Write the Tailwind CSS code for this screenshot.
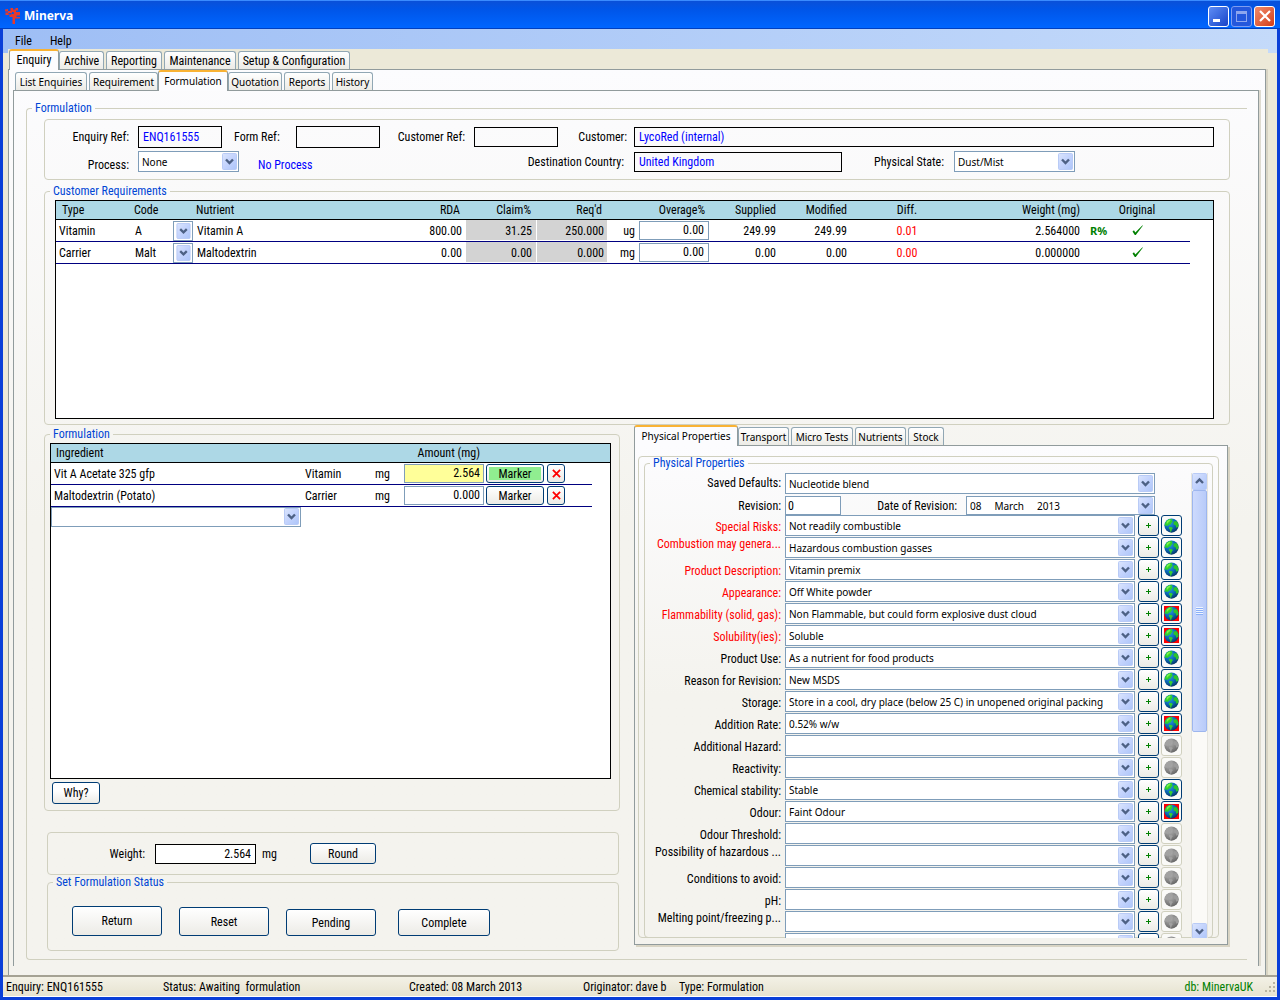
<!DOCTYPE html>
<html lang="en">
<head>
<meta charset="utf-8">
<title>Minerva</title>
<script src="https://cdn.jsdelivr.net/npm/@tailwindcss/browser@4"></script>
</head>
<body class="flex min-h-screen flex-col overflow-x-hidden bg-[#0a3fd8] font-['Roboto_Condensed','Liberation_Sans_Narrow',sans-serif] text-xs leading-[14px] text-black">

<svg class="absolute h-0 w-0" aria-hidden="true">
  <defs>
    <linearGradient id="btnBlue" x1="0" y1="0" x2="1" y2="1"><stop offset="0" stop-color="#dbe5fd"/><stop offset=".5" stop-color="#c3d3fd"/><stop offset="1" stop-color="#adc5f9"/></linearGradient>
    <radialGradient id="sea" cx=".38" cy=".3" r=".75"><stop offset="0" stop-color="#2b9be0"/><stop offset=".55" stop-color="#0a68b4"/><stop offset="1" stop-color="#06305e"/></radialGradient>
    <radialGradient id="seaGray" cx=".38" cy=".3" r=".75"><stop offset="0" stop-color="#b4b4b4"/><stop offset=".6" stop-color="#858585"/><stop offset="1" stop-color="#636363"/></radialGradient>
  </defs>
  <symbol id="down" viewBox="0 0 15 17"><rect x=".5" y=".5" width="14" height="16" rx="1" fill="url(#btnBlue)" stroke="#b9cbf6"/><path d="M4 6.500 7.500 10 11 6.500" fill="none" stroke="#4d6185" stroke-width="2.400"/></symbol>
  <symbol id="up" viewBox="0 0 15 17"><rect x=".5" y=".5" width="14" height="16" rx="1" fill="url(#btnBlue)" stroke="#b9cbf6"/><path d="M4 10 7.500 6.500 11 10" fill="none" stroke="#4d6185" stroke-width="2.400"/></symbol>
  <symbol id="globe" viewBox="0 0 16 16"><circle cx="8" cy="8" r="7.600" fill="url(#sea)"/><path d="M1.200 5.500 3 2.600 6 1l3 .2-.6 1.500 1 1-1.600 1.600-.6 1.500-1.800.2L4 8.600 2.500 8 .6 8.300z" fill="#2fd02c"/><path d="M3 3.400 6 1.600l1 1.200-2 1.400-.8 1.400-1.500.4z" fill="#7df04c"/><path d="M11 3.500 13.800 3.400 15.400 6.800 15.200 9.500 13 10.500 12.500 8 10.400 7 10 5z" fill="#2cc42a"/><path d="M5.500 9.200 8.600 9.800 9.400 11 8.200 12.400 7.800 14.400 6.800 15 6.400 12.400 5.200 10.800z" fill="#35cf2f"/></symbol>
  <symbol id="globeGray" viewBox="0 0 16 16"><circle cx="8" cy="8" r="7.600" fill="url(#seaGray)"/><path d="M1.200 5.500 3 2.600 6 1l3 .2-.6 1.500 1 1-1.600 1.600-.6 1.500-1.800.2L4 8.600 2.500 8 .6 8.300z" fill="#a2a2a2"/><path d="M11 3.500 13.800 3.400 15.400 6.800 15.200 9.500 13 10.500 12.500 8 10.400 7 10 5z" fill="#9c9c9c"/><path d="M5.500 9.200 8.600 9.800 9.400 11 8.200 12.400 7.800 14.400 6.800 15 6.400 12.400 5.200 10.800z" fill="#a0a0a0"/></symbol>
  <symbol id="tick" viewBox="0 0 13 11"><path d="M1.500 6.500 3 5.300 4.300 7.500 11.500 .3 11.800 .8 4.800 10 3.800 10z" fill="#008000"/></symbol>
  <symbol id="cross" viewBox="0 0 10 10"><path d="M1 1 9 9M9 1 1 9" stroke="#f00" stroke-width="2"/></symbol>
</svg>

<header class="flex h-[29px] items-center border-t border-b border-t-[#3a8bff] border-b-[#0040c0] bg-linear-to-b from-[#0a50d8] via-[#0055e8] via-30% to-[#0066ff] pt-[3px] pr-[5px] pl-1">
  <svg class="h-[18px] w-[18px]" viewBox="0 0 18 18"><path d="M1 2.500 4 2v2h2.500V1H9v1.500h2.500V1H14v2.500h-2V5h4v3.500h-3.500v1.500H16v1.500h-5V17H8.500v-7H5.500V8H1.500V5.500H4V4.500H1zM4.500 6H7.500v1.500H4.500zM9.500 5H8v2h2z" fill="#e8392b" fill-rule="evenodd"/></svg>
  <h1 class="ml-[2px] flex-1 font-['Noto_Sans',sans-serif] text-[12px] font-bold text-white">Minerva</h1>
  <div class="flex gap-[2px]">
    <button aria-label="Minimise" class="flex h-[21px] w-[21px] items-end rounded-[3px] border border-white bg-linear-to-br from-[#5f8df5] to-[#1941c8] p-1"><span class="h-[3px] w-[7px] bg-white"></span></button>
    <button aria-label="Maximise" class="flex h-[21px] w-[21px] items-center justify-center rounded-[3px] border border-[#7f9df0] bg-[#2457dc]"><span class="h-[11px] w-[11px] border border-t-[3px] border-[#8ea6ee]"></span></button>
    <button aria-label="Close" class="flex h-[21px] w-[21px] items-center justify-center rounded-[3px] border border-white bg-linear-to-br from-[#f08a6a] to-[#d33a10]"><svg class="h-3 w-3" viewBox="0 0 12 12"><path d="M1 1 11 11M11 1 1 11" stroke="#fff" stroke-width="2.200"/></svg></button>
  </div>
</header>

<div class="mx-[3px] mb-[3px] flex flex-1 flex-col bg-[#ece9d8]">
  <nav class="flex h-6 gap-[18px] bg-linear-to-r from-[#9ebef5] to-[#c4dafa] pt-[5px] pl-3">
    <button class="h-[14px]">File</button>
    <button class="h-[14px]">Help</button>
  </nav>

  <div class="relative -mt-1 mr-[9px] ml-[5px] flex flex-1 flex-col bg-[#ece9d8]">
    <div role="tablist" class="ml-px flex h-[20px] items-end gap-[2px]">
      <button role="tab" aria-selected="true" class="relative z-10 -mr-[2px] -mb-px h-[21px] w-[50px] rounded-t-[3px] border-x border-t-2 border-x-[#919b9c] border-t-[#f9b233] bg-[#fcfcfe] pb-[2px]">Enquiry</button>
      <button role="tab" class="h-[18px] w-[45px] rounded-t-[3px] border border-b-0 border-[#91a7b4] bg-linear-to-b from-white to-[#ecebe6]">Archive</button>
      <button role="tab" class="h-[18px] w-[56px] rounded-t-[3px] border border-b-0 border-[#91a7b4] bg-linear-to-b from-white to-[#ecebe6]">Reporting</button>
      <button role="tab" class="h-[18px] w-[72px] rounded-t-[3px] border border-b-0 border-[#91a7b4] bg-linear-to-b from-white to-[#ecebe6]">Maintenance</button>
      <button role="tab" class="h-[18px] w-[112px] rounded-t-[3px] border border-b-0 border-[#91a7b4] bg-linear-to-b from-white to-[#ecebe6]">Setup &amp; Configuration</button>
    </div>

    <div class="mr-[2px] flex flex-1 flex-col border border-b-0 border-[#919b9c] bg-linear-to-b from-[#fcfcfe] to-[#f4f3ee] to-50% pt-px pr-[6px] pb-[9px] pl-1 shadow-[2px_0_0_#d8d4c4]">
      <div role="tablist" class="ml-[2px] flex h-[19px] items-end gap-[2px] font-['Noto_Sans',sans-serif] text-[10px]">
        <button role="tab" class="h-[18px] w-[72px] rounded-t-[3px] border border-b-0 border-[#91a7b4] bg-linear-to-b from-white to-[#ecebe6]">List Enquiries</button>
        <button role="tab" class="h-[18px] w-[69px] rounded-t-[3px] border border-b-0 border-[#91a7b4] bg-linear-to-b from-white to-[#ecebe6]">Requirement</button>
        <button role="tab" aria-selected="true" class="relative z-10 -mx-[2px] -mb-px h-[21px] w-[70px] rounded-t-[3px] border-x border-t-2 border-x-[#919b9c] border-t-[#f9b233] bg-[#fcfcfe] pb-[2px]">Formulation</button>
        <button role="tab" class="h-[18px] w-[54px] rounded-t-[3px] border border-b-0 border-[#91a7b4] bg-linear-to-b from-white to-[#ecebe6]">Quotation</button>
        <button role="tab" class="h-[18px] w-[46px] rounded-t-[3px] border border-b-0 border-[#91a7b4] bg-linear-to-b from-white to-[#ecebe6]">Reports</button>
        <button role="tab" class="h-[18px] w-[41px] rounded-t-[3px] border border-b-0 border-[#91a7b4] bg-linear-to-b from-white to-[#ecebe6]">History</button>
      </div>

      <main class="flex flex-1 flex-col border border-b-0 border-[#919b9c] pt-[10px] pr-[11px] pb-[6px] pl-3 shadow-[2px_0_0_#dedbd0]">
        <fieldset class="min-w-0 flex-1 rounded-l-[4px] border border-r-0 border-[#d0d0bf] pr-[17px] pb-[7px] pl-[17px]">
          <legend class="-ml-[12px] px-[3px] text-[#0046d5]">Formulation</legend>

          <section class="mt-1 rounded-[4px] border border-[#d0d0bf] pt-[6px] pr-[15px] pb-[7px]">
            <div class="flex items-center">
              <label for="enq" class="mr-[9px] w-[84px] text-right">Enquiry Ref:</label>
              <input id="enq" value="ENQ161555" class="h-[22px] w-[84px] border border-black bg-transparent px-1 text-[#0000ff]">
              <label for="form" class="mr-[9px] w-[65px] pl-3">Form Ref:</label>
              <input id="form" class="h-[22px] w-[84px] border border-black bg-transparent px-1">
              <label for="cref" class="mr-[9px] w-[85px] text-right">Customer Ref:</label>
              <input id="cref" class="h-[20px] w-[84px] border border-black bg-transparent px-1">
              <label for="cust" class="mr-[7px] w-[69px] text-right">Customer:</label>
              <input id="cust" value="LycoRed (internal)" class="h-[20px] min-w-0 flex-1 border border-black bg-transparent px-1 text-[#0000ff]">
            </div>
            <div class="mt-[3px] flex items-center">
              <label for="proc" class="mr-[9px] w-[84px] pt-[6px] text-right">Process:</label>
              <span class="relative flex h-[21px] w-[101px]"><select id="proc" class="w-full appearance-none border border-[#7f9db9] bg-white pl-[3px] font-['Noto_Sans',sans-serif] text-[10px]"><option>None</option></select><svg class="pointer-events-none absolute top-[2px] right-[2px] h-[17px] w-[15px]"><use href="#down"/></svg></span>
              <span class="ml-[19px] w-[236px] pt-[6px] text-[#0000ff]">No Process</span>
              <label for="dest" class="mr-[10px] w-[130px] text-right">Destination Country:</label>
              <input id="dest" value="United Kingdom" class="h-[20px] w-[208px] border border-black bg-transparent px-1 text-[#0000ff]">
              <label for="state" class="mr-[10px] w-[102px] text-right">Physical State:</label>
              <span class="relative flex h-[21px] w-[121px]"><select id="state" class="w-full appearance-none border border-[#7f9db9] bg-white pl-[3px] font-['Noto_Sans',sans-serif] text-[10px]"><option>Dust/Mist</option></select><svg class="pointer-events-none absolute top-[2px] right-[2px] h-[17px] w-[15px]"><use href="#down"/></svg></span>
            </div>
          </section>

          <fieldset class="mt-1 min-w-0 rounded-[4px] border border-[#d0d0bf] pr-[15px] pb-[5px] pl-[10px]">
            <legend class="-ml-[5px] px-[3px] text-[#0046d5]">Customer Requirements</legend>
            <div class="mt-[2px] min-h-[219px] border border-black bg-white">
              <table class="w-full table-fixed border-separate border-spacing-0">
                <colgroup><col class="w-[76px]"><col class="w-[40px]"><col class="w-[22px]"><col><col class="w-[71px]"><col class="w-[71px]"><col class="w-[71px]"><col class="w-[31px]"><col class="w-[74px]"><col class="w-[67px]"><col class="w-[71px]"><col class="w-[112px]"><col class="w-[122px]"><col class="w-[27px]"><col class="w-[50px]"><col class="w-[28px]"><col class="w-[23px]"></colgroup>
                <thead>
                  <tr class="h-[19px] bg-[#add8e6] [&>th]:border-b [&>th]:border-black [&>th]:p-0 [&>th]:font-normal">
                    <th class="text-left"><span class="pl-[6px]">Type</span></th>
                    <th class="text-left"><span class="pl-[2px]">Code</span></th>
                    <th></th>
                    <th class="text-left"><span class="pl-[2px]">Nutrient</span></th>
                    <th class="text-right"><span class="pr-[6px]">RDA</span></th>
                    <th class="text-right"><span class="pr-[6px]">Claim%</span></th>
                    <th class="text-right"><span class="pr-[6px]">Req'd</span></th>
                    <th></th>
                    <th class="text-right"><span class="pr-[8px]">Overage%</span></th>
                    <th class="text-right"><span class="pr-[4px]">Supplied</span></th>
                    <th class="text-right"><span class="pr-[4px]">Modified</span></th>
                    <th>Diff.</th>
                    <th class="text-right"><span class="pr-[5px]">Weight (mg)</span></th>
                    <th></th>
                    <th>Original</th>
                    <th></th>
                    <th></th>
                  </tr>
                </thead>
                <tbody id="requirements"></tbody>
              </table>
            </div>
          </fieldset>

          <div class="flex">
            <div class="mr-[14px] flex w-[576px] shrink flex-col pt-[2px]">
              <fieldset class="min-w-0 rounded-[4px] border border-[#d0d0bf] pr-[8px] pb-[6px] pl-[5px]">
                <legend class="px-[3px] text-[#0046d5]">Formulation</legend>
                <div class="mt-[2px] min-h-[336px] border border-black bg-white">
                  <table class="w-full table-fixed border-separate border-spacing-0">
                    <colgroup><col><col class="w-[60px]"><col class="w-[39px]"><col class="w-[81px]"><col class="w-[62px]"><col class="w-[45px]"><col class="w-[18px]"></colgroup>
                    <thead>
                      <tr class="h-[19px] bg-[#add8e6] [&>th]:border-b [&>th]:border-black [&>th]:p-0 [&>th]:font-normal">
                        <th class="text-left"><span class="pl-[5px]">Ingredient</span></th><th></th><th></th>
                        <th class="text-right"><span class="pr-[5px]">Amount (mg)</span></th><th></th><th></th><th></th>
                      </tr>
                    </thead>
                    <tbody id="ingredients"></tbody>
                  </table>
                  <span class="relative flex h-[20px] w-[250px]"><select aria-label="Add ingredient" class="w-full appearance-none border border-[#7f9db9] bg-white"><option></option></select><svg class="pointer-events-none absolute top-px right-[2px] h-[17px] w-[15px]"><use href="#down"/></svg></span>
                </div>
                <button class="mt-[3px] ml-[2px] block h-[22px] w-[48px] rounded-[3px] border border-[#003c74] bg-linear-to-b from-white from-40% to-[#ecebe6]">Why?</button>
              </fieldset>

              <section class="mt-[21px] mr-[1px] ml-[3px] flex h-[43px] items-center rounded-[4px] border border-[#d0d0bf]">
                <label for="weight" class="mr-[10px] w-[97px] text-right">Weight:</label>
                <input id="weight" value="2.564" class="h-[20px] w-[101px] border border-black bg-white px-1 text-right">
                <span class="ml-[6px] w-[48px]">mg</span>
                <button class="h-[21px] w-[66px] rounded-[3px] border border-[#003c74] bg-linear-to-b from-white to-[#ecebe6]">Round</button>
              </section>

              <fieldset class="mr-[1px] ml-[3px] min-w-0 rounded-[4px] border border-[#d0d0bf] pb-[14px] pl-[5px]">
                <legend class="px-[3px] text-[#0046d5]">Set Formulation Status</legend>
                <div class="mt-[17px] ml-[19px] flex items-end">
                  <button class="h-[30px] w-[90px] rounded-[3px] border border-[#003c74] bg-linear-to-b from-white to-[#ecebe6]">Return</button>
                  <button class="ml-[17px] h-[29px] w-[90px] rounded-[3px] border border-[#003c74] bg-linear-to-b from-white to-[#ecebe6]">Reset</button>
                  <button class="ml-[17px] h-[27px] w-[90px] rounded-[3px] border border-[#003c74] bg-linear-to-b from-white to-[#ecebe6]">Pending</button>
                  <button class="ml-[22px] h-[27px] w-[92px] rounded-[3px] border border-[#003c74] bg-linear-to-b from-white to-[#ecebe6]">Complete</button>
                </div>
              </fieldset>
            </div>

            <div class="flex min-w-0 flex-1 flex-col">
              <div role="tablist" class="flex h-[20px] items-end gap-[2px] font-['Noto_Sans',sans-serif] text-[10px]">
                <button role="tab" aria-selected="true" class="relative z-10 -mr-[2px] -mb-px h-[21px] w-[104px] rounded-t-[3px] border-x border-t-2 border-x-[#919b9c] border-t-[#f9b233] bg-[#fcfcfe] pb-[2px]">Physical Properties</button>
                <button role="tab" class="h-[18px] w-[51px] rounded-t-[3px] border border-b-0 border-[#91a7b4] bg-linear-to-b from-white to-[#ecebe6]">Transport</button>
                <button role="tab" class="h-[18px] w-[62px] rounded-t-[3px] border border-b-0 border-[#91a7b4] bg-linear-to-b from-white to-[#ecebe6]">Micro Tests</button>
                <button role="tab" class="h-[18px] w-[51px] rounded-t-[3px] border border-b-0 border-[#91a7b4] bg-linear-to-b from-white to-[#ecebe6]">Nutrients</button>
                <button role="tab" class="h-[18px] w-[36px] rounded-t-[3px] border border-b-0 border-[#91a7b4] bg-linear-to-b from-white to-[#ecebe6]">Stock</button>
              </div>
              <div class="mr-[2px] border border-[#919b9c] bg-linear-to-b from-[#fcfcfe] to-[#f4f3ee] to-50% pt-[10px] pr-2 pb-[6px] pl-[3px] shadow-[2px_2px_0_#d8d4c4]">
                <div class="rounded-[4px] border border-[#d0d0bf] pr-[5px] pl-[5px]">
                  <fieldset class="-mt-px -mb-px min-w-0 rounded-[4px] border border-[#d0d0bf] pr-[4px]">
                    <legend class="ml-[5px] px-[3px] text-[#0046d5]">Physical Properties</legend>
                    <div class="mt-[3px] -mb-px flex h-[465px] overflow-hidden">
                      <div class="min-w-0 flex-1">
                        <div class="mr-[27px] mb-[2px] flex h-[21px]">
                          <label for="saved" class="mr-1 w-[136px] pt-[3px] text-right">Saved Defaults:</label>
                          <span class="relative flex flex-1"><select id="saved" class="w-full appearance-none border border-[#7f9db9] bg-white pl-[3px] font-['Noto_Sans',sans-serif] text-[10px]"><option>Nucleotide blend</option></select><svg class="pointer-events-none absolute top-[2px] right-[2px] h-[17px] w-[15px]"><use href="#down"/></svg></span>
                        </div>
                        <div class="mr-[27px] flex h-[19px]">
                          <label for="rev" class="mr-1 w-[136px] pt-[3px] text-right">Revision:</label>
                          <input id="rev" value="0" class="w-[56px] border border-[#7f9db9] bg-white px-[2px]">
                          <label for="date" class="mr-[9px] w-[116px] pt-[3px] text-right">Date of Revision:</label>
                          <span class="relative flex flex-1"><input id="date" value="08&nbsp;&nbsp;&nbsp;&nbsp;&nbsp;March&nbsp;&nbsp;&nbsp;&nbsp;&nbsp;2013" class="w-full border border-[#7f9db9] bg-white pl-[3px] font-['Noto_Sans',sans-serif] text-[10px]"><svg class="pointer-events-none absolute top-px right-[2px] h-[17px] w-[15px]"><use href="#down"/></svg></span>
                        </div>
                        <div id="properties"></div>
                      </div>
                      <div class="ml-[9px] flex w-[17px] flex-col border-x border-[#e6e5de] bg-[#fbfaf7]" aria-hidden="true">
                        <svg class="h-[17px] w-[15px]"><use href="#up"/></svg>
                        <div class="flex h-[242px] items-center justify-center rounded-[2px] border border-[#9db6ee] bg-linear-to-r from-[#cddafd] to-[#b8cbf9]">
                          <span class="h-[8px] w-[7px] bg-[repeating-linear-gradient(#eef4fe_0_1px,#8cb0f8_1px_2px)]"></span>
                        </div>
                        <div class="flex-1"></div>
                        <svg class="h-[15px] w-[15px]" viewBox="0 0 15 15"><use href="#down" width="15" height="17"/></svg>
                      </div>
                    </div>
                  </fieldset>
                </div>
              </div>
            </div>
          </div>
        </fieldset>
      </main>
    </div>
  </div>

  <footer class="flex h-[22px] items-center border-t-2 border-[#a5a294] bg-linear-to-b from-[#f3f1e6] to-[#e6e2cf] pl-[3px] shadow-[inset_0_-1px_0_#fff]">
    <span class="w-[157px]">Enquiry: ENQ161555</span>
    <span class="w-[246px]">Status: Awaiting&nbsp; formulation</span>
    <span class="w-[174px]">Created: 08 March 2013</span>
    <span class="w-[96px]">Originator: dave b</span>
    <span class="flex-1">Type: Formulation</span>
    <span class="mr-[11px] text-[#008000]">db: MinervaUK</span>
    <svg class="mr-px h-3 w-3 shrink-0" viewBox="0 0 12 12"><path d="M9 1h2v2H9zM5 5h2v2H5zM9 5h2v2H9zM1 9h2v2H1zM5 9h2v2H5zM9 9h2v2H9z" fill="#b8b4a2"/></svg>
  </footer>
</div>

<script>
const requirements = [
  ['Vitamin', 'A', 'Vitamin A', '800.00', '31.25', '250.000', 'ug', '0.00', '249.99', '249.99', '0.01', '2.564000', 'R%'],
  ['Carrier', 'Malt', 'Maltodextrin', '0.00', '0.00', '0.000', 'mg', '0.00', '0.00', '0.00', '0.00', '0.000000', ''],
];
document.getElementById('requirements').innerHTML = requirements.map(r => `
  <tr class="h-[22px] [&>td]:border-b [&>td]:border-[#000080] [&>td]:p-0">
    <td><span class="pl-[3px]">${r[0]}</span></td>
    <td><span class="pl-[3px]">${r[1]}</span></td>
    <td><button aria-label="Choose code" class="ml-px block h-[20px] w-[20px] border border-[#7f9db9] bg-white p-px"><svg class="ml-px h-[16px] w-[15px]"><use href="#down"/></svg></button></td>
    <td><span class="pl-[3px]">${r[2]}</span></td>
    <td class="text-right"><span class="pr-[4px]">${r[3]}</span></td>
    <td class="text-right"><span class="mr-px mb-px block h-[20px] bg-[#d3d3d3] pt-[4px] pr-[4px]">${r[4]}</span></td>
    <td class="text-right"><span class="mr-px mb-px block h-[20px] bg-[#d3d3d3] pt-[4px] pr-[3px]">${r[5]}</span></td>
    <td class="text-right"><span class="pr-[4px]">${r[6]}</span></td>
    <td><input aria-label="Overage %" value="${r[7]}" class="mb-px block h-[19px] w-[70px] border border-[#7f9db9] bg-white px-[4px] text-right"></td>
    <td class="text-right"><span class="pr-[4px]">${r[8]}</span></td>
    <td class="text-right"><span class="pr-[4px]">${r[9]}</span></td>
    <td class="text-center text-[#ff0000]">${r[10]}</td>
    <td class="text-right"><span class="pr-[5px]">${r[11]}</span></td>
    <td class="font-['Noto_Sans',sans-serif] text-[11px] font-bold text-[#008000]"><span class="pl-[5px]">${r[12]}</span></td>
    <td><svg class="mx-auto h-[11px] w-[13px]" role="img" aria-label="Original"><use href="#tick"/></svg></td>
    <td></td>
  </tr>`).join('');

const ingredients = [
  ['Vit A Acetate 325 gfp', 'Vitamin', '2.564', 'bg-[#ffff99]', 'bg-[#90ee90]'],
  ['Maltodextrin (Potato)', 'Carrier', '0.000', 'bg-white', 'bg-transparent'],
];
document.getElementById('ingredients').innerHTML = ingredients.map(r => `
  <tr class="h-[22px] [&>td]:border-b [&>td]:border-[#000080] [&>td]:p-0">
    <td><span class="pl-[3px]">${r[0]}</span></td>
    <td>${r[1]}</td>
    <td class="text-right"><span class="pr-[14px]">mg</span></td>
    <td><input aria-label="Amount" value="${r[2]}" class="mb-px block h-[19px] w-[80px] border border-[#7f9db9] px-[3px] text-right ${r[3]}"></td>
    <td><button class="ml-px block h-[19px] w-[58px] rounded-[3px] border border-[#003c74] bg-linear-to-b from-white to-[#ecebe6] p-[2px]"><span class="block h-[13px] leading-[14px] ${r[4]}">Marker</span></button></td>
    <td><button aria-label="Remove" class="flex h-[19px] w-[18px] items-center justify-center rounded-[3px] border border-[#003c74] bg-linear-to-b from-white to-[#ecebe6]"><svg class="h-[9px] w-[9px]"><use href="#cross"/></svg></button></td>
  </tr>`).join('');

/* label, value, globe state, label colour, label offset for clipped captions */
const on = 'ok', alert_ = 'alert', off = 'off';
const red = 'text-[#ff0000]', black = 'text-black', low = 'pt-[5px]', high = 'pt-0';
const properties = [
  ['Special Risks:', 'Not readily combustible', on, red, low],
  ['Combustion may genera...', 'Hazardous combustion gasses', on, red, high],
  ['Product Description:', 'Vitamin premix', on, red, low],
  ['Appearance:', 'Off White powder', on, red, low],
  ['Flammability (solid, gas):', 'Non Flammable, but could form explosive dust cloud', alert_, red, low],
  ['Solubility(ies):', 'Soluble', alert_, red, low],
  ['Product Use:', 'As a nutrient for food products', on, black, low],
  ['Reason for Revision:', 'New MSDS', on, black, low],
  ['Storage:', 'Store in a cool, dry place (below 25 C) in unopened original packing', on, black, low],
  ['Addition Rate:', '0.52% w/w', alert_, black, low],
  ['Additional Hazard:', '', off, black, low],
  ['Reactivity:', '', off, black, low],
  ['Chemical stability:', 'Stable', on, black, low],
  ['Odour:', 'Faint Odour', alert_, black, low],
  ['Odour Threshold:', '', off, black, low],
  ['Possibility of hazardous ...', '', off, black, high],
  ['Conditions to avoid:', '', off, black, low],
  ['pH:', '', off, black, low],
  ['Melting point/freezing p...', '', off, black, high],
  ['', '', off, black, low],
];
const globe = {
  ok: ['border-[#003c74]', 'bg-transparent', '#globe'],
  alert: ['border-[#003c74]', 'bg-[#ff0000]', '#globe'],
  off: ['border-[#d0d0bf]', 'bg-transparent', '#globeGray'],
};
document.getElementById('properties').innerHTML = properties.map((p, i) => `
  <div class="mb-px flex h-[21px]">
    <label for="p${i}" class="mr-1 w-[136px] shrink-0 whitespace-nowrap text-right ${p[3]} ${p[4]}">${p[0]}</label>
    <span class="relative mr-[3px] flex min-w-0 flex-1"><select id="p${i}" class="w-full appearance-none border border-[#7f9db9] bg-white pl-[3px] font-['Noto_Sans',sans-serif] text-[10px] text-black"><option>${p[1]}</option></select><svg class="pointer-events-none absolute top-[2px] right-[2px] h-[17px] w-[15px]"><use href="#down"/></svg></span>
    <button aria-label="Add" class="mr-[2px] flex w-[21px] items-center justify-center rounded-[3px] border border-[#003c74] bg-linear-to-b from-white to-[#ecebe6]"><svg class="h-[5px] w-[5px]" viewBox="0 0 5 5"><path d="M2 0h1v2h2v1H3v2H2V3H0V2h2z" fill="#008000"/></svg></button>
    <button aria-label="Translate" class="flex w-[21px] items-center justify-center rounded-[3px] border bg-[#fafaf8] ${globe[p[2]][0]}"><svg class="h-[15px] w-[15px] ${globe[p[2]][1]}"><use href="${globe[p[2]][2]}"/></svg></button>
  </div>`).join('');
</script>
</body>
</html>
